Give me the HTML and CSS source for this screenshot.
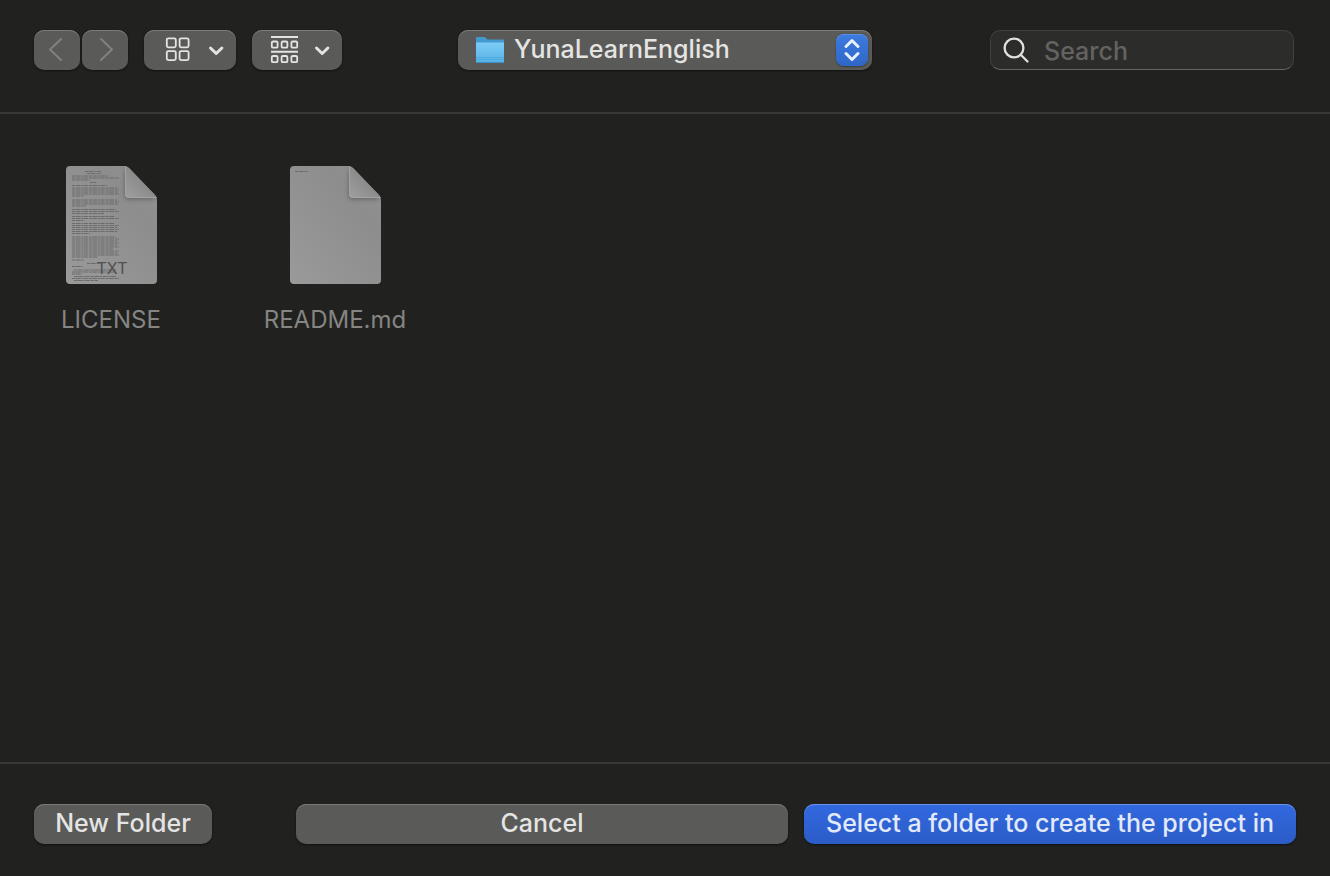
FILE: index.html
```html
<!DOCTYPE html>
<html lang="en">
<head>
<meta charset="utf-8">
<title>Select a folder</title>
<meta name="viewport" content="width=device-width, initial-scale=1">
<link rel="stylesheet" href="styles.css">
</head>
<body>
<div class="dialog">
  <header class="toolbar">
    <div class="tools">
      <div class="history">
        <button class="button nav" type="button" aria-label="Back" disabled>
          <svg width="46" height="40" viewBox="0 0 46 40"><path d="M27 9 16 19.500 27 30"/></svg>
        </button>
        <button class="button nav" type="button" aria-label="Forward" disabled>
          <svg width="46" height="40" viewBox="0 0 46 40"><path d="M19 9 30 19.500 19 30"/></svg>
        </button>
      </div>
      <button class="button view" type="button" aria-label="Icon view">
        <svg width="92" height="40" viewBox="0 0 92 40">
          <g class="thin"><rect x="22.800" y="8.300" width="9" height="9" rx="1.500"/><rect x="35.600" y="8.300" width="9" height="9" rx="1.500"/><rect x="22.800" y="21.100" width="9" height="9" rx="1.500"/><rect x="35.600" y="21.100" width="9" height="9" rx="1.500"/></g>
          <path class="chevron" d="M66.500 18 72.200 23.500 77.900 18"/>
        </svg>
      </button>
      <button class="button group" type="button" aria-label="Group items">
        <svg width="90" height="40" viewBox="0 0 90 40">
          <path class="bars" d="M19 7H46M19 21.700H46"/>
          <g class="thin"><rect x="19.800" y="11.500" width="5.800" height="6.200" rx="1.300"/><rect x="29.600" y="11.500" width="5.800" height="6.200" rx="1.300"/><rect x="39.400" y="11.500" width="5.800" height="6.200" rx="1.300"/><rect x="19.800" y="26" width="5.800" height="6.200" rx="1.300"/><rect x="29.600" y="26" width="5.800" height="6.200" rx="1.300"/><rect x="39.400" y="26" width="5.800" height="6.200" rx="1.300"/></g>
          <path class="chevron" d="M64.500 18 70.200 23.500 75.900 18"/>
        </svg>
      </button>
    </div>

    <div class="location">
      <select class="location-select" aria-label="Folder">
        <option>YunaLearnEnglish</option>
      </select>
      <svg class="folder" width="30" height="28" viewBox="0 0 30 28" aria-hidden="true">
        <defs>
          <linearGradient id="folder-front" x1="0" y1="0" x2="0" y2="1"><stop offset="0" stop-color="#7ccdf5"/><stop offset="1" stop-color="#56b1e6"/></linearGradient>
        </defs>
        <path d="M1 2Q1 1 2 1H9Q10 1 11 2L12.500 3.500H28Q29 3.500 29 4.500V9H1Z" fill="#4499cf"/>
        <path d="M1 6.500H29V26Q29 27 28 27H2Q1 27 1 26Z" fill="url(#folder-front)"/>
        <path d="M1 21.500H29M1 23.500H29" stroke="#48a4da" stroke-width=".7"/>
        <path d="M1 26.500H29" stroke="#3c8fc2"/>
      </svg>
      <svg class="stepper" width="32" height="32" viewBox="0 0 32 32" aria-hidden="true"><path d="M10 12.500 16 6.500 22 12.500M10 19.500 16 25.500 22 19.500"/></svg>
    </div>

    <label class="search">
      <svg width="28" height="28" viewBox="0 0 28 28" aria-hidden="true"><circle cx="11" cy="12" r="9.400"/><path d="M18 19 24.500 25.500"/></svg>
      <input type="search" placeholder="Search" aria-label="Search">
    </label>
  </header>

  <main class="files">
    <figure class="file">
      <svg width="91" height="118" viewBox="0 0 91 118" aria-hidden="true">
        <defs>
          <linearGradient id="page" x1="0" y1="1" x2="1" y2="0"><stop offset="0" stop-color="#9a9a9a"/><stop offset=".7" stop-color="#8d8d8d"/><stop offset="1" stop-color="#929292"/></linearGradient>
          <linearGradient id="fold" x1="0" y1="1" x2="1" y2="0"><stop offset="0" stop-color="#a0a0a0"/><stop offset=".5" stop-color="#8c8c8c"/></linearGradient>
          <filter id="soft" x="-30%" y="-30%" width="160%" height="160%"><feGaussianBlur stdDeviation="2.200"/></filter>
          <clipPath id="sheet"><path d="M4 0H58Q61 0 63 2L89 29Q91 31 91 34V114Q91 118 87 118H4Q0 118 0 114V4Q0 0 4 0Z"/></clipPath>
        </defs>
        <g clip-path="url(#sheet)">
          <rect width="91" height="118" fill="url(#page)"/>
          <path d="M59 2V29Q59 33 63 33H90Z" fill="#4c4c4c" opacity=".7" filter="url(#soft)"/>
          <path class="print" d="M19 5.500H36M21 7.500H35M6 10H42M6 12H53M6 14H24M24 16.500H30M6 19.500H41M6 22H52M6 24H53M6 26H52M6 28H53M6 30H18M6 34H51M6 36H53M6 38H52M6 40H20M6 43.500H50M6 45.500H53M6 47.500H38M6 50.500H49M6 52.500H53M6 54.500H18M6 57.500H49M6 59.500H53M6 61.500H52M6 63.500H53M6 65.500H51M6 67.500H24M6 71H50M6 73H53M6 75H52M6 77H53M6 79H51M6 81H53M6 83H47M6 85H53M6 87H52M6 89H53M6 91H32M6 94H18M21 97.500H34M6 100.500H17M8 104H51M6 106H48M6 108H16M8 110.500H50M6 112.500H53M8 114.500H32"/>
          <path d="M59 0V28Q59 32 63 32H91V0Z" fill="url(#fold)"/>
          <path d="M59.500 0V28Q59.500 31.500 63 31.500H91" fill="none" stroke="#a3a3a3"/>
        </g>
        <text class="file-type" x="46" y="108" text-anchor="middle">TXT</text>
      </svg>
      <figcaption>LICENSE</figcaption>
    </figure>
    <figure class="file">
      <svg width="91" height="118" viewBox="0 0 91 118" aria-hidden="true">
        <g clip-path="url(#sheet)">
          <rect width="91" height="118" fill="url(#page)"/>
          <path d="M59 2V29Q59 33 63 33H90Z" fill="#4c4c4c" opacity=".7" filter="url(#soft)"/>
          <path class="print" d="M5 5.500H18"/>
          <path d="M59 0V28Q59 32 63 32H91V0Z" fill="url(#fold)"/>
          <path d="M59.500 0V28Q59.500 31.500 63 31.500H91" fill="none" stroke="#a3a3a3"/>
        </g>
      </svg>
      <figcaption>README.md</figcaption>
    </figure>
  </main>

  <footer class="actions">
    <button class="button new-folder" type="button">New Folder</button>
    <div class="choices">
      <button class="button" type="button">Cancel</button>
      <button class="button primary" type="submit">Select a folder to create the project in</button>
    </div>
  </footer>
</div>
</body>
</html>
```
FILE: styles.css
```css
* { box-sizing: border-box; }

body {
  margin: 0;
  background: #21211f;
  color: #e4e4e3;
  font: 500 25px/30px Inter, "Liberation Sans", sans-serif;
}

.dialog {
  display: flex;
  flex-direction: column;
  min-height: 100vh;
}

svg { display: block; }

.toolbar {
  display: grid;
  grid-template-columns: 1fr minmax(300px, 414px) 1fr;
  align-items: center;
  padding: 30px 34px 42px;
  border-bottom: 2px solid #383836;
}

.tools { display: flex; gap: 16px; }
.history { display: flex; gap: 2px; }

.button,
.location-select {
  height: 40px;
  border: 0;
  border-radius: 10px;
  background: #5a5a58;
  color: inherit;
  font: inherit;
  box-shadow: inset 0 1px #7b7b79, 0 1px 2px #111110;
}

.button {
  padding: 0 16px 2px;
  white-space: nowrap;
}

.nav,
.view,
.group { padding: 0; }

.button svg {
  fill: none;
  stroke: #e4e4e3;
  stroke-linecap: round;
  stroke-linejoin: round;
}

.nav svg { stroke: #81817f; stroke-width: 2; }
.button .thin { stroke-width: 1.8; }
.bars { stroke-width: 2; stroke-linecap: butt; }
.chevron { stroke-width: 3; }

.location { position: relative; }

.location-select {
  appearance: none;
  display: block;
  width: 100%;
  padding: 0 44px 2px 56px;
}

.folder,
.stepper {
  position: absolute;
  pointer-events: none;
}

.folder { left: 17px; top: 6px; }

.stepper {
  right: 4px;
  top: 4px;
  border-radius: 8px;
  background: linear-gradient(#3c7be0, #2f66c8);
  box-shadow: inset 0 1px #5c8fe4, 0 1px 2px #3b3b3a;
  fill: none;
  stroke: #e8effc;
  stroke-width: 3;
  stroke-linecap: round;
  stroke-linejoin: round;
}

.search {
  display: flex;
  align-items: center;
  justify-self: end;
  gap: 13px;
  width: 304px;
  height: 40px;
  margin-right: 2px;
  padding: 0 12px;
  border: 1px solid #40403e;
  border-bottom-color: #656563;
  border-radius: 10px;
  background: #2c2c2a;
}

.search svg {
  flex: none;
  fill: none;
  stroke: #e0e0df;
  stroke-width: 2.3;
  stroke-linecap: round;
}

.search input {
  appearance: none;
  width: 100%;
  padding: 2px 0 0;
  border: 0;
  outline: 0;
  background: none;
  color: inherit;
  font: inherit;
}

.search input::placeholder { color: #636361; opacity: 1; }

.files {
  display: flex;
  flex: 1;
  flex-wrap: wrap;
  align-content: flex-start;
  gap: 40px 70px;
  padding: 52px 34px;
}

.file {
  display: flex;
  flex-direction: column;
  align-items: center;
  gap: 21px;
  width: 154px;
  margin: 0;
  color: #858583;
  font-size: 24px;
  font-weight: 400;
}

.print {
  fill: none;
  stroke: #6b6b6b;
  stroke-width: 1;
  stroke-dasharray: 3 .6 5 .8 2 .5 4 .9;
}

.file-type {
  fill: #505050;
  font-size: 16px;
}

.actions {
  display: flex;
  justify-content: space-between;
  gap: 16px;
  padding: 40px 34px 32px;
  border-top: 2px solid #383836;
}

.new-folder { width: 178px; }

.choices {
  display: grid;
  grid-template-columns: 1fr 1fr;
  gap: 16px;
  width: 1000px;
}

.primary {
  background: linear-gradient(#3269e0, #2b5bc6);
  color: #e2e9fa;
  box-shadow: inset 0 1px #6a93ea, 0 1px 2px #111110;
}
```
